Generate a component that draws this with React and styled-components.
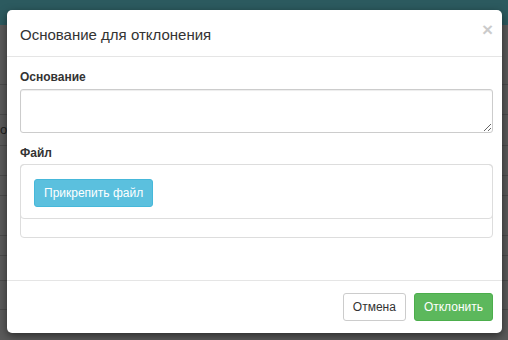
import React from 'react';
import styled, { createGlobalStyle } from 'styled-components';

const GlobalStyle = createGlobalStyle`
  html, body {
    margin: 0;
    padding: 0;
    background: #575757;
    overflow: hidden;
  }
  body {
    font-family: "Liberation Sans", Arial, sans-serif;
    color: #333;
  }
`;

const Page = styled.div`
  position: relative;
  width: 508px;
  height: 340px;
  overflow: hidden;
  background: #5a5a5a;
`;

const NavBar = styled.div`
  height: 25px;
  background: #2c5a5f;
`;

const BgTable = styled.div`
  display: flex;
  flex-direction: column;
`;

const BgRow = styled.div`
  height: ${p => p.h}px;
  border-bottom: 1px solid #4b4b4b;
  display: flex;
  align-items: ${p => (p.top ? 'flex-start' : 'center')};
  font-size: 13px;
  color: #1e1e1e;
`;

const BgCell = styled.div`
  padding-left: ${p => p.pad || 0}px;
  border-left: ${p => (p.divider ? '1px solid #444' : 'none')};
  height: 100%;
  display: flex;
  align-items: ${p => (p.top ? 'flex-start' : 'center')};
  margin-left: ${p => p.left || 0}px;
  line-height: 14px;
`;

const Modal = styled.div`
  position: absolute;
  left: 7px;
  top: 10px;
  width: 495px;
  background: #fff;
  border-radius: 5px;
  box-shadow: 0 3px 9px rgba(0, 0, 0, 0.5);
  display: flex;
  flex-direction: column;
`;

const Header = styled.div`
  height: 46px;
  padding: 0 13px;
  border-bottom: 1px solid #e5e5e5;
  display: flex;
  align-items: center;
  justify-content: space-between;
`;

const Title = styled.h4`
  margin: 2px 0 0;
  font-size: 15px;
  font-weight: normal;
  color: #333;
`;

const Close = styled.button`
  border: 0;
  background: none;
  padding: 0;
  font-family: "Liberation Sans", Arial, sans-serif;
  font-size: 19px;
  font-weight: bold;
  color: #000;
  opacity: 0.2;
  line-height: 1;
  margin-right: -4px;
  margin-top: -7px;
`;

const Body = styled.div`
  padding: 12px 9px 42px 13px;
`;

const Label = styled.label`
  display: block;
  font-size: 12px;
  font-weight: bold;
  line-height: 17px;
  margin-bottom: ${p => p.mb}px;
`;

const Group = styled.div`
  margin-bottom: ${p => p.mb || 0}px;
`;

const TextArea = styled.textarea`
  display: block;
  box-sizing: border-box;
  width: 100%;
  height: 44px;
  border: 1px solid #ccc;
  border-radius: 3px;
  box-shadow: inset 0 1px 1px rgba(0, 0, 0, 0.075);
  resize: vertical;
  font-family: inherit;
  font-size: 13px;
  padding: 6px 10px;
  outline: none;
`;

const FilePanel = styled.div`
  border: 1px solid #ddd;
  border-radius: 4px;
  height: 74px;
  box-sizing: border-box;
`;

const DropZone = styled.div`
  height: 55px;
  box-sizing: border-box;
  margin-right: -1px;
  margin-left: -1px;
  margin-top: -1px;
  border: 1px solid #ddd;
  border-radius: 4px;
  padding: 14px 13px;
`;

const Button = styled.button`
  box-sizing: border-box;
  height: 28px;
  padding: 0 ${p => p.px || 9}px;
  font-family: "Liberation Sans", Arial, sans-serif;
  font-size: 12px;
  border-radius: 3px;
  border: 1px solid ${p => p.border};
  background: ${p => p.bg};
  color: ${p => p.color};
  cursor: pointer;
`;

const Footer = styled.div`
  border-top: 1px solid #e5e5e5;
  padding: 12px 9px;
  display: flex;
  justify-content: flex-end;
  gap: 8px;
`;

const rows = [
  { h: 59, text: '' },
  { h: 29, text: '' },
  { h: 30, text: 'o' },
  { h: 29, text: '' },
  { h: 19, text: '' },
  { h: 39, text: '' },
  { h: 19, text: '' },
  { h: 24, text: '' },
  { h: 28, text: '' },
  { h: 44, text: '' },
];

export default function App() {
  return (
    <>
      <GlobalStyle />
      <Page>
        <NavBar />
        <BgTable>
          {rows.map((r, i) => (
            <BgRow key={i} h={r.h}>
              <BgCell>{r.text}</BgCell>
            </BgRow>
          ))}
          <BgRow h={14} top>
            <BgCell left={269} divider pad={10} top>2021-09-27 22:42:32</BgCell>
          </BgRow>
        </BgTable>

        <Modal>
          <Header>
            <Title>Основание для отклонения</Title>
            <Close>×</Close>
          </Header>
          <Body>
            <Group mb={12}>
              <Label mb={3}>Основание</Label>
              <TextArea />
            </Group>
            <Group>
              <Label mb={2}>Файл</Label>
              <FilePanel>
                <DropZone>
                  <Button bg="#5bc0de" border="#46b8da" color="#fff" px={9}>
                    Прикрепить файл
                  </Button>
                </DropZone>
              </FilePanel>
            </Group>
          </Body>
          <Footer>
            <Button bg="#fff" border="#ccc" color="#333">Отмена</Button>
            <Button bg="#5cb85c" border="#4cae4c" color="#fff">Отклонить</Button>
          </Footer>
        </Modal>
      </Page>
    </>
  );
}
